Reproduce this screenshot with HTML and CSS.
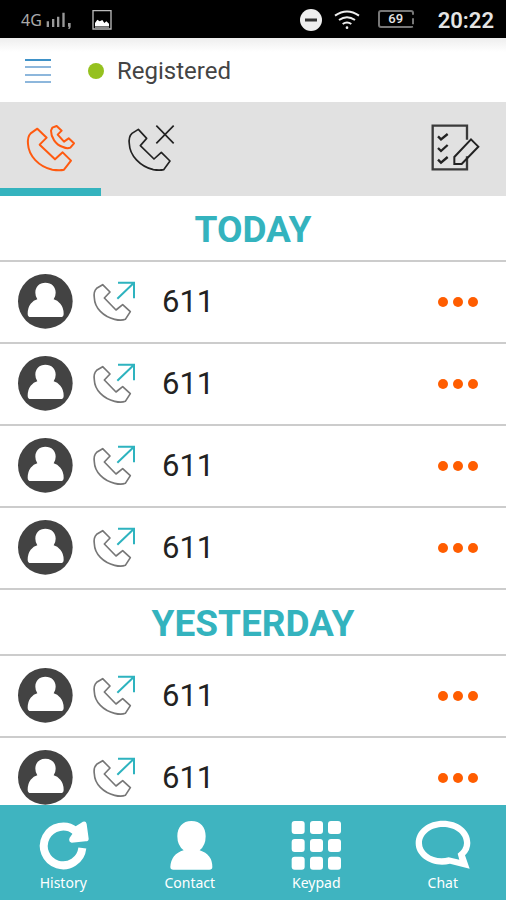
FILE: index.html
```html
<!DOCTYPE html>
<html lang="en">
<head>
<meta charset="utf-8">
<meta name="viewport" content="width=device-width, initial-scale=1">
<title>Call history</title>
<link rel="stylesheet" href="styles.css">
</head>
<body>
<svg class="defs" aria-hidden="true">
  <symbol id="avatar" viewBox="0 0 165 165">
    <circle cx="82" cy="82" r="82" fill="#434343"/>
    <path fill="#fff" d="M82 26 C101 26 113 38 113 56 Q113 67 107 76 Q118 79 127 89 Q137 101 137 119 Q137 129 128 129 H38 Q29 129 29 119 Q29 101 38 89 Q47 79 58 76 Q52 67 52 56 C52 38 64 26 82 26Z"/>
  </symbol>
  <symbol id="outgoing" viewBox="0 0 135 126">
    <path fill="none" stroke="#777" stroke-width="5" stroke-linejoin="round" d="M32 14 L54 36 L37 54 L72 90 L92 74 L115 95 L100 118 Q88 123 68 118 C34 110 8 84 7 54 Q4 34 14 25Z"/>
    <path fill="none" stroke="#2eb3bf" stroke-width="6" d="M78 8 H126 V55 M126 8 L76 56"/>
  </symbol>
  <symbol id="dots" viewBox="0 0 42 12">
    <circle cx="6" cy="6" r="5"/><circle cx="21" cy="6" r="5"/><circle cx="36" cy="6" r="5"/>
  </symbol>
</svg>

<div class="status">
  <span class="network">4G</span>
  <svg class="signal" width="26" height="18" viewBox="0 0 78 54" fill="#999"><path d="M2 31h7v17H2zM18 24h7v24h-7zM33 17h7v31h-7zM49 5h7v43h-7zM66 36h8v13l-4 6h-4l3-8h-3z"/></svg>
  <svg class="picture" width="20" height="20" viewBox="0 0 60 60"><path fill="none" stroke="#bbb" stroke-width="4" d="M3 2h54v55H3z"/><path fill="#fff" d="M9 49V39l7-10 7 5 8-4 6 9 6-5 8 7v8z"/><path fill="#888" d="M9 49h42v6H9z"/></svg>
  <svg class="quiet" width="24" height="24" viewBox="0 0 24 24"><circle cx="12" cy="12" r="11" fill="#eee"/><path stroke="#333" stroke-width="3" d="M6 12h12"/></svg>
  <svg class="wifi" width="26" height="20" viewBox="0 0 78 60" fill="none" stroke="#eee" stroke-width="6"><path d="M3 17Q39-8 75 17M15 30Q39 13 63 30M26 42Q39 33 52 42"/><circle cx="39" cy="53" r="4" fill="#eee" stroke="none"/></svg>
  <span class="battery">69</span>
  <time class="clock">20:22</time>
</div>

<header class="header">
  <button class="menu" aria-label="Menu"><svg width="26" height="28" viewBox="0 0 26 28" stroke-width="2"><path stroke="#3f92c8" d="M0 3h26"/><path stroke="#8db7dc" d="M0 10h26M0 18h26M0 25h26"/></svg></button>
  <span class="online"></span>
  <span class="state">Registered</span>
</header>

<div class="tabs">
  <button class="tab active" aria-label="All calls"><svg width="52" height="50" viewBox="0 0 156 150" fill="none" stroke="#ff5a10" stroke-width="6" stroke-linejoin="round"><path d="M37 17 L65 44 L44 65 L90 109 L113 88 L138 113 L117 140 Q105 143 82 140 C41 131 11 98 9 63 Q7 41 17 31Z"/><path d="M95 9 L110 23 L98 35 L117 56 L131 46 L147 61 L136 74 Q126 78 114 72 C91 65 78 42 78 23 L82 14Z"/></svg></button>
  <button class="tab" aria-label="Missed calls"><svg width="52" height="50" viewBox="0 0 156 150" fill="none" stroke="#222" stroke-width="5" stroke-linejoin="round"><path d="M37 19 L62 46 L43 68 L84 108 L106 88 L132 114 L113 140 Q101 143 82 140 C42 130 11 97 10 63 Q7 41 18 31Z"/><path d="M91 8 L143 61 M143 8 L91 61"/></svg></button>
  <button class="tab edit" aria-label="Edit list"><svg width="50" height="50" viewBox="0 0 150 150" fill="none" stroke="#3a3a3a" stroke-width="7"><path d="M111 50V8H8V139H111V100"/><path stroke="#222" d="M24 40l9 9 20-16M24 75l9 9 20-18M24 110l9 9 20-17"/><path stroke="#222" stroke-width="6" d="M123 49L145 71L95 123H73V102Z"/></svg></button>
</div>

<main class="calls">
  <h2 class="day">TODAY</h2>
  <ul class="list">
    <li class="call"><svg class="avatar"><use href="#avatar"/></svg><svg class="kind"><use href="#outgoing"/></svg><span class="number">611</span><button class="more" aria-label="More"><svg><use href="#dots"/></svg></button></li>
    <li class="call"><svg class="avatar"><use href="#avatar"/></svg><svg class="kind"><use href="#outgoing"/></svg><span class="number">611</span><button class="more" aria-label="More"><svg><use href="#dots"/></svg></button></li>
    <li class="call"><svg class="avatar"><use href="#avatar"/></svg><svg class="kind"><use href="#outgoing"/></svg><span class="number">611</span><button class="more" aria-label="More"><svg><use href="#dots"/></svg></button></li>
    <li class="call"><svg class="avatar"><use href="#avatar"/></svg><svg class="kind"><use href="#outgoing"/></svg><span class="number">611</span><button class="more" aria-label="More"><svg><use href="#dots"/></svg></button></li>
  </ul>
  <h2 class="day">YESTERDAY</h2>
  <ul class="list">
    <li class="call"><svg class="avatar"><use href="#avatar"/></svg><svg class="kind"><use href="#outgoing"/></svg><span class="number">611</span><button class="more" aria-label="More"><svg><use href="#dots"/></svg></button></li>
    <li class="call"><svg class="avatar"><use href="#avatar"/></svg><svg class="kind"><use href="#outgoing"/></svg><span class="number">611</span><button class="more" aria-label="More"><svg><use href="#dots"/></svg></button></li>
  </ul>
</main>

<nav class="nav">
  <a class="item" href="#history"><svg width="54" height="50" viewBox="0 0 162 150"><path fill="none" stroke="#fff" stroke-width="24" d="M139 84 A58 58 0 1 1 118 33"/><path fill="#fff" d="M135 9Q149 -1 152 12L158 56Q158 64 149 64L107 68Q96 66 101 53L109 42L114 22Z"/></svg>History</a>
  <a class="item" href="#contact"><svg width="54" height="50" viewBox="0 0 162 150" fill="#fff"><path d="M85 3C113 3 128 21 128 49Q128 77 110 91Q148 103 148 141Q148 149 139 149H31Q22 149 22 141Q24 102 62 91Q43 77 43 49C43 21 59 3 85 3Z"/></svg>Contact</a>
  <a class="item" href="#keypad"><svg width="54" height="50" viewBox="0 0 162 150" fill="#fff"><rect x="8" y="3" width="39" height="39" rx="9"/><rect x="63" y="3" width="39" height="39" rx="9"/><rect x="117" y="3" width="39" height="39" rx="9"/><rect x="8" y="57" width="39" height="39" rx="9"/><rect x="63" y="57" width="39" height="39" rx="9"/><rect x="117" y="57" width="39" height="39" rx="9"/><rect x="8" y="110" width="39" height="39" rx="9"/><rect x="63" y="110" width="39" height="39" rx="9"/><rect x="117" y="110" width="39" height="39" rx="9"/></svg>Keypad</a>
  <a class="item" href="#chat"><svg width="56" height="50" viewBox="0 0 168 150"><path fill="#fff" fill-rule="evenodd" d="M84 2C129 2 166 29 166 69Q166 90 150 106L164 146L105 131C54 144 2 113 2 70C2 29 41 2 84 2ZM84 21C50 21 21 41 21 70C21 100 59 123 101 112L133 119L128 101Q147 87 147 69C147 41 118 21 84 21Z"/></svg>Chat</a>
</nav>
</body>
</html>
```
FILE: styles.css
```css
* { box-sizing: border-box; }

body {
  display: flex;
  flex-direction: column;
  height: 100vh;
  margin: 0;
  overflow: hidden;
  background: #fff;
  font-family: Roboto, "Liberation Sans", sans-serif;
}

button {
  display: flex;
  align-items: center;
  justify-content: center;
  padding: 0;
  border: 0;
  background: none;
}

svg { flex: none; }

.defs { position: absolute; width: 0; height: 0; }

.status {
  display: flex;
  flex: none;
  align-items: center;
  height: 38px;
  padding: 2px 12px 0 21px;
  background: #000;
  color: #e4e4e4;
}

.network { color: #aaa; font: 16px "Noto Sans", sans-serif; }
.signal { margin-left: 4px; }
.picture { margin-left: 20px; }
.quiet { margin-left: auto; }
.wifi { margin-left: 11px; }

.battery {
  width: 36px;
  height: 18px;
  margin: 0 24px 2px 18px;
  border: 2px solid #777;
  border-right-style: dashed;
  border-radius: 3px;
  font-size: 13px;
  font-weight: 500;
  line-height: 14px;
  text-align: center;
}

.clock { font-size: 22px; font-weight: 600; }

.header {
  display: flex;
  flex: none;
  align-items: center;
  height: 64px;
  padding: 2px 25px 0;
  background: linear-gradient(#eee, #fff 14px);
}

.online {
  width: 16px;
  height: 16px;
  margin: 0 13px 0 37px;
  border-radius: 50%;
  background: #95c11f;
}

.state { color: #444; font-size: 24px; }

.tabs {
  display: grid;
  flex: none;
  grid-template-columns: repeat(5, 1fr);
  height: 94px;
  background: #e1e1e1;
}

.tab {
  padding-top: 6px;
  border-bottom: 8px solid transparent;
}

.active { border-color: #34b3be; }
.edit { grid-column: 5; }

.calls {
  flex: 1;
  min-height: 0;
  overflow: hidden;
}

.day {
  height: 66px;
  margin: 0;
  border-bottom: 2px solid #ccc;
  color: #34b3be;
  font-size: 37px;
  font-weight: 700;
  line-height: 68px;
  text-align: center;
}

.list { margin: 0; padding: 0; list-style: none; }

.call {
  display: flex;
  align-items: center;
  height: 82px;
  padding: 0 27px 2px 18px;
  border-bottom: 2px solid #ccc;
}

.avatar { width: 55px; height: 55px; }
.kind { width: 45px; height: 42px; margin: 0 25px 0 19px; }
.number { color: #222; font-size: 31px; line-height: 40px; padding-top: 2px; }
.more { margin-left: auto; padding-top: 2px; fill: #ff5d00; }
.more svg { width: 42px; height: 12px; }

.nav {
  display: grid;
  flex: none;
  grid-template-columns: repeat(4, 1fr);
  height: 95px;
  background: #3fb4c0;
}

.item {
  display: flex;
  flex-direction: column;
  align-items: center;
  padding-top: 15px;
  color: #fff;
  font: 14px/26px "Noto Sans", sans-serif;
  text-decoration: none;
}
```
